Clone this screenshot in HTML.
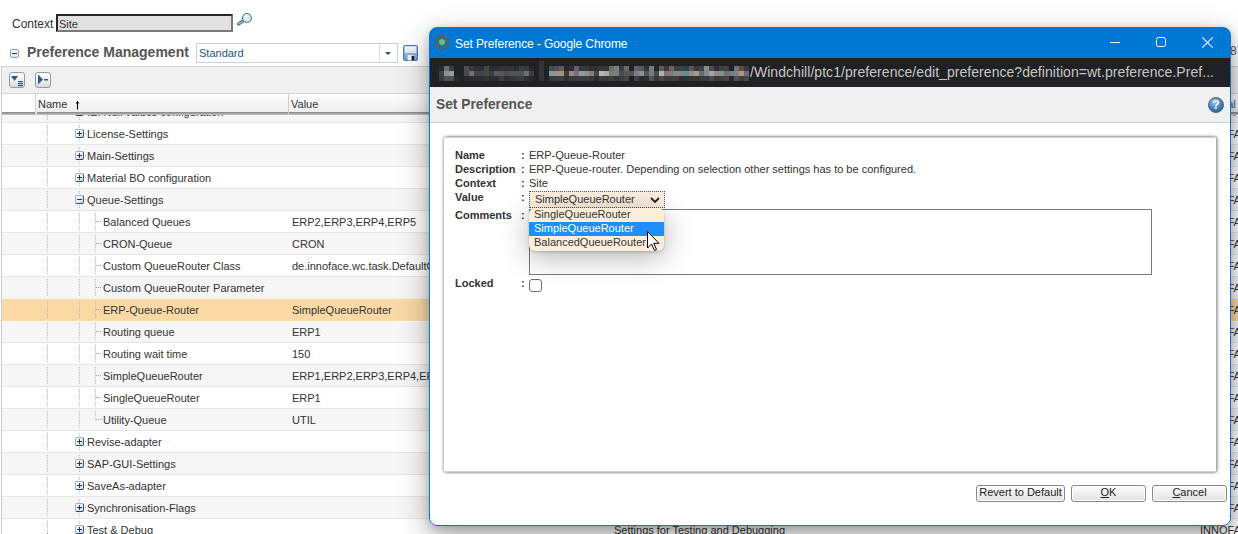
<!DOCTYPE html>
<html><head><meta charset="utf-8">
<style>
*{box-sizing:border-box;margin:0;padding:0}
html,body{width:1238px;height:534px;overflow:hidden;background:#fff;font-family:"Liberation Sans",sans-serif;position:relative}
.abs{position:absolute}
#ctxlbl{left:12px;top:17px;font-size:12px;color:#333}
#mag{left:236px;top:11px}
#ctxin{left:56px;top:14px;width:177px;height:18px;background:#e1e1e1;border-top:2px solid #262626;border-left:2px solid #262626;border-bottom:2px solid #7a7a7a;border-right:2px solid #7a7a7a;font-size:11px;color:#333;padding:2px 0 0 1px;line-height:12px}
#pm{left:27px;top:44px;font-size:14px;font-weight:bold;color:#555}
#pmicon{left:10px;top:49px;width:9px;height:9px;border:1px solid #8aa3bd;border-radius:2px;background:linear-gradient(#fff,#dfe8f0)}
#pmicon:after{content:"";position:absolute;left:1px;top:3px;width:5px;height:1px;background:#1f3d5c}
#std{left:196px;top:43px;width:202px;height:20px;border:1px solid #cfcfcf;background:#fff;font-size:11px;color:#1f5a82;padding:3px 0 0 2px}
#std .dv{position:absolute;left:182px;top:0;width:1px;height:18px;background:#ddd}
#std .ar{position:absolute;left:188px;top:8px;width:0;height:0;border-left:3px solid transparent;border-right:3px solid transparent;border-top:3px solid #1f5673}
#save{left:403px;top:45px;width:15px;height:16px;border:1px solid #4a77a8;border-radius:1px;background:linear-gradient(#e9f1fa,#b8cde4)}
#save:before{content:"";position:absolute;left:2px;top:0;width:9px;height:6px;background:#fff;border:1px solid #7d9fc4;border-top:none}
#save:after{content:"";position:absolute;left:5px;top:9px;width:4px;height:5px;background:#1e3f66}
#panelL{left:1px;top:66px;width:1px;height:468px;background:#cdcdcd}
#panelT{left:1px;top:66px;width:1237px;height:1px;background:#d3d3d3}
#toolbar{left:2px;top:67px;width:1236px;height:27px;background:#f0f0f0;border-bottom:1px solid #d6d6d6}
.tb{position:absolute;top:72px;width:16px;height:16px;border:1px solid #9a9a9a;border-radius:3px;background:linear-gradient(#fefefe 0,#f4f4f4 45%,#d9d9d9 100%)}
#hdr{left:2px;top:94px;width:1236px;height:21px;background:linear-gradient(#fefefe,#f3f3f3 60%,#e9e9e9);z-index:5}
#hdr .c0{position:absolute;left:0;top:0;width:33px;height:18px;background:#fff}
#hdr .bl{position:absolute;top:18px;height:3px;background:linear-gradient(#8a8a8a,#a8a8a8 66%,#d4d4d4)}
#hdr .sep{position:absolute;top:0;width:1px;height:21px;background:#cfcfcf}
#hdr .ht{position:absolute;top:4px;font-size:11px;color:#333}
.row{position:absolute;left:2px;width:1236px;height:22px;box-shadow:inset 0 1px 0 #e6e6e6;font-size:11px;color:#333;overflow:hidden}
.row.g{background:#f6f6f6}
.row.w{background:#fff}
.row.sel{background:#fad9a5;box-shadow:inset 0 1px 0 #eef3f8;height:23px;z-index:1}
.row.after{box-shadow:inset 0 2px 0 #fff}
.row span{position:absolute;top:6px;white-space:nowrap}
.row .v{left:290px}
.row .d{left:612px}
.row .o{left:1198px}
.vl{position:absolute;top:3px;width:1px;height:18px;background:repeating-linear-gradient(to bottom,#bababa 0 1px,transparent 1px 2px)}
.vh{position:absolute;top:3px;width:1px;height:9px;background:repeating-linear-gradient(to bottom,#bababa 0 1px,transparent 1px 2px)}
.hl{position:absolute;left:94px;top:11px;width:6px;height:1px;background:repeating-linear-gradient(to right,#a0a0a0 0 1px,transparent 1px 2px)}
.ic{position:absolute;left:73px;top:7px;width:9px;height:9px;border:1px solid;border-color:#9db1ca #3d5878 #2b4463 #9db1ca;border-radius:2px;background:linear-gradient(135deg,#fdfeff,#e9eff6 50%,#c9d6e6);z-index:2}
.ic:before{content:"";position:absolute;left:1px;top:3px;width:5px;height:1px;background:#1f3a5a}
.cd{position:absolute;left:83px;top:11px;width:1px;height:1px;background:#b0b0b0}
.ic.plus:after{content:"";position:absolute;left:3px;top:1px;width:1px;height:5px;background:#1f3a5a}
#behind87{left:1230px;top:44px;font-size:12px;color:#555}
/* dialog */
#dlg{z-index:10;left:429px;top:27px;width:802px;height:499px;border:1px solid #0d74d0;border-radius:8px;background:linear-gradient(#0078d4 0 30px,#fff 30px);overflow:hidden;box-shadow:0 10px 30px rgba(0,0,0,.34),0 5px 10px rgba(0,0,0,.1),0 0 7px rgba(0,0,0,.08)}
#title{left:0;top:0;width:800px;height:30px;background:#0078d4}
#title .tt{position:absolute;left:25px;top:9px;font-size:12px;color:#fff;letter-spacing:-0.1px}
#addr{left:0;top:30px;width:800px;height:29px;background:#202124}
#addr .url{position:absolute;left:320px;top:6px;font-size:14px;color:#c6c6c6;letter-spacing:0.05px}
#dhdr{left:0;top:59px;width:800px;height:36px;background:#f0f0f0;border-bottom:1px solid #cfcfcf}
#dhdr .h{position:absolute;left:6px;top:10px;font-size:13.75px;font-weight:bold;color:#555}
#help{left:778px;top:69px;width:16px;height:16px;border-radius:50%;background:radial-gradient(circle at 40% 30%,#9cc3e8,#3f76aa 60%,#2b5a8a);border:1px solid #3a6591;color:#fff;font-size:12px;font-weight:bold;text-align:center;line-height:14px}
#cpanel{left:14px;top:109px;width:772px;height:335px;background:#fff;border-top:1px solid #d2d2d2;border-bottom:1px solid #d2d2d2;box-shadow:-1.5px 0 3px rgba(0,0,0,.42),1.5px 0 3px rgba(0,0,0,.42)}
.fl{position:absolute;font-size:11px;color:#333;white-space:nowrap}
.fl b{font-weight:bold}
#sel{left:99px;top:163px;width:136px;height:17px;border:1px dotted #555;background:#fcefdf;font-size:11px;color:#333;padding:0 0 0 5px;line-height:14px}
#ta{left:99px;top:181px;width:623px;height:66px;border:1px solid #7a7a7a;background:#fff}
#cb{left:99px;top:251px;width:13px;height:13px;border:1px solid #707070;border-radius:3px;background:#fff}
.btn{position:absolute;top:457px;height:17px;border:1px solid #8a8a8a;border-radius:3px;background:linear-gradient(#fdfdfd,#efefef 50%,#e2e2e2);font-size:11px;color:#222;text-align:center;line-height:13px;box-shadow:inset 0 0 0 1px #fff}
#dd{z-index:11;left:529px;top:208px;width:135px;height:43px;background:#fdeedc;border-radius:6px;box-shadow:0 6px 28px rgba(0,0,0,.3),0 1px 3px rgba(0,0,0,.2);font-size:11px;color:#333}
#dd div{position:absolute;left:0;width:135px;height:14px;padding-left:5px;line-height:12px;white-space:nowrap}
#dd .hi{background:#1e8fff;color:#fff}
</style></head><body>
<div id="ctxlbl" class="abs">Context</div>
<div id="ctxin" class="abs">Site</div>
<svg id="mag" class="abs" width="16" height="16" viewBox="0 0 16 16"><path d="M2.6 13.0 L6.8 10.2" stroke="#3f6586" stroke-width="3.2" stroke-linecap="round"/><path d="M2.6 13.0 L6.8 10.2" stroke="#a9cde8" stroke-width="1.3" stroke-linecap="round"/><circle cx="10.9" cy="6.9" r="4.4" fill="#d7ecfa" stroke="#4f7594" stroke-width="1.1"/><circle cx="10" cy="5.8" r="1.6" fill="#fff" opacity=".8"/></svg>
<div id="pmicon" class="abs"></div>
<div id="pm" class="abs">Preference Management</div>
<div id="std" class="abs">Standard<div class="dv"></div><div class="ar"></div></div>
<svg class="abs" style="left:403px;top:45px" width="15" height="16" viewBox="0 0 16 16" preserveAspectRatio="none"><defs><linearGradient id="sg" x1="0" y1="0" x2="0" y2="1"><stop offset="0" stop-color="#a9c3e6"/><stop offset="1" stop-color="#7ea3d2"/></linearGradient><linearGradient id="lg" x1="0" y1="0" x2="0" y2="1"><stop offset="0" stop-color="#fdfeff"/><stop offset="1" stop-color="#d9e3ef"/></linearGradient></defs><rect x="0.6" y="0.6" width="14.8" height="14.8" rx="2" fill="url(#sg)" stroke="#4d7bb8" stroke-width="1.2"/><rect x="1.8" y="1.4" width="12.4" height="6.6" fill="url(#lg)"/><rect x="5" y="10" width="7" height="5.3" fill="#f2f5fa"/><rect x="9.2" y="10.8" width="2.8" height="4.6" fill="#0d1b33"/></svg>
<div id="behind87" class="abs">87</div>
<div id="panelT" class="abs"></div>
<div id="toolbar" class="abs"></div>
<div class="tb" style="left:9px"><svg width="14" height="14" style="position:absolute;left:0;top:0"><polygon points="1,3 8,3 4.5,8" fill="#2b5c85"/><rect x="8" y="8" width="5" height="1.2" fill="#2b5c85"/><rect x="8" y="10" width="5" height="1.2" fill="#2b5c85"/><rect x="8" y="12" width="5" height="1.2" fill="#2b5c85"/></svg></div>
<div class="tb" style="left:35px"><svg width="14" height="14" style="position:absolute;left:0;top:0"><polygon points="2,1.5 7,6.5 2,11.5" fill="#2b5c85"/><rect x="8" y="6" width="4" height="1.5" fill="#2b5c85"/></svg></div>
<div class="row g" style="top:100px"><i class="vl" style="left:45px"></i><i class="vl" style="left:77px"></i><i class="ic minus"></i><i class="cd"></i><span class="n" style="left:85px">IE: Null values configuration</span><span class="o">INNOFACE</span></div>
<div class="row w" style="top:122px"><i class="vl" style="left:45px"></i><i class="vl" style="left:77px"></i><i class="ic plus"></i><i class="cd"></i><span class="n" style="left:85px">License-Settings</span><span class="o">INNOFACE</span></div>
<div class="row g" style="top:144px"><i class="vl" style="left:45px"></i><i class="vl" style="left:77px"></i><i class="ic plus"></i><i class="cd"></i><span class="n" style="left:85px">Main-Settings</span><span class="o">INNOFACE</span></div>
<div class="row w" style="top:166px"><i class="vl" style="left:45px"></i><i class="vl" style="left:77px"></i><i class="ic plus"></i><i class="cd"></i><span class="n" style="left:85px">Material BO configuration</span><span class="o">INNOFACE</span></div>
<div class="row g" style="top:188px"><i class="vl" style="left:45px"></i><i class="vl" style="left:77px"></i><i class="ic minus"></i><i class="cd"></i><span class="n" style="left:85px">Queue-Settings</span><span class="o">INNOFACE</span></div>
<div class="row w" style="top:210px"><i class="vl" style="left:45px"></i><i class="vl" style="left:77px"></i><i class="vl" style="left:93px"></i><i class="hl"></i><span class="n" style="left:101px">Balanced Queues</span><span class="v">ERP2,ERP3,ERP4,ERP5</span><span class="o">INNOFACE</span></div>
<div class="row g" style="top:232px"><i class="vl" style="left:45px"></i><i class="vl" style="left:77px"></i><i class="vl" style="left:93px"></i><i class="hl"></i><span class="n" style="left:101px">CRON-Queue</span><span class="v">CRON</span><span class="o">INNOFACE</span></div>
<div class="row w" style="top:254px"><i class="vl" style="left:45px"></i><i class="vl" style="left:77px"></i><i class="vl" style="left:93px"></i><i class="hl"></i><span class="n" style="left:101px">Custom QueueRouter Class</span><span class="v">de.innoface.wc.task.DefaultQueueRouter</span><span class="o">INNOFACE</span></div>
<div class="row g" style="top:276px"><i class="vl" style="left:45px"></i><i class="vl" style="left:77px"></i><i class="vl" style="left:93px"></i><i class="hl"></i><span class="n" style="left:101px">Custom QueueRouter Parameter</span><span class="o">INNOFACE</span></div>
<div class="row sel" style="top:298px"><i class="vl" style="left:45px"></i><i class="vl" style="left:77px"></i><i class="vl" style="left:93px"></i><i class="hl"></i><span class="n" style="left:101px">ERP-Queue-Router</span><span class="v">SimpleQueueRouter</span><span class="o">INNOFACE</span></div>
<div class="row g after" style="top:320px"><i class="vl" style="left:45px"></i><i class="vl" style="left:77px"></i><i class="vl" style="left:93px"></i><i class="hl"></i><span class="n" style="left:101px">Routing queue</span><span class="v">ERP1</span><span class="o">INNOFACE</span></div>
<div class="row w" style="top:342px"><i class="vl" style="left:45px"></i><i class="vl" style="left:77px"></i><i class="vl" style="left:93px"></i><i class="hl"></i><span class="n" style="left:101px">Routing wait time</span><span class="v">150</span><span class="o">INNOFACE</span></div>
<div class="row g" style="top:364px"><i class="vl" style="left:45px"></i><i class="vl" style="left:77px"></i><i class="vl" style="left:93px"></i><i class="hl"></i><span class="n" style="left:101px">SimpleQueueRouter</span><span class="v">ERP1,ERP2,ERP3,ERP4,ERP5</span><span class="o">INNOFACE</span></div>
<div class="row w" style="top:386px"><i class="vl" style="left:45px"></i><i class="vl" style="left:77px"></i><i class="vl" style="left:93px"></i><i class="hl"></i><span class="n" style="left:101px">SingleQueueRouter</span><span class="v">ERP1</span><span class="o">INNOFACE</span></div>
<div class="row g" style="top:408px"><i class="vl" style="left:45px"></i><i class="vl" style="left:77px"></i><i class="vh" style="left:93px"></i><i class="hl"></i><span class="n" style="left:101px">Utility-Queue</span><span class="v">UTIL</span><span class="o">INNOFACE</span></div>
<div class="row w" style="top:430px"><i class="vl" style="left:45px"></i><i class="vl" style="left:77px"></i><i class="ic plus"></i><i class="cd"></i><span class="n" style="left:85px">Revise-adapter</span><span class="o">INNOFACE</span></div>
<div class="row g" style="top:452px"><i class="vl" style="left:45px"></i><i class="vl" style="left:77px"></i><i class="ic plus"></i><i class="cd"></i><span class="n" style="left:85px">SAP-GUI-Settings</span><span class="o">INNOFACE</span></div>
<div class="row w" style="top:474px"><i class="vl" style="left:45px"></i><i class="vl" style="left:77px"></i><i class="ic plus"></i><i class="cd"></i><span class="n" style="left:85px">SaveAs-adapter</span><span class="o">INNOFACE</span></div>
<div class="row g" style="top:496px"><i class="vl" style="left:45px"></i><i class="vl" style="left:77px"></i><i class="ic plus"></i><i class="cd"></i><span class="n" style="left:85px">Synchronisation-Flags</span><span class="o">INNOFACE</span></div>
<div class="row w" style="top:518px"><i class="vl" style="left:45px"></i><i class="vl" style="left:77px"></i><i class="ic plus"></i><i class="cd"></i><span class="n" style="left:85px">Test &amp; Debug</span><span class="d">Settings for Testing and Debugging</span><span class="o">INNOFACE</span></div>
<div id="hdr" class="abs"><div class="c0"></div><div class="bl" style="left:0;width:33px"></div><div class="bl" style="left:35px;width:1201px"></div><div class="sep" style="left:33px"></div><div class="sep" style="left:286px"></div><span class="ht" style="left:36px">Name</span><svg width="6" height="11" style="position:absolute;left:73px;top:6px"><path d="M2.5 2.5 V9.5" stroke="#000" stroke-width="1.1"/><path d="M0.7 3.6 L2.5 0.8 L4.3 3.6 Z" fill="#000"/></svg><span class="ht" style="left:289px">Value</span><span class="ht" style="left:1197px;color:#2b5c9a">Internal</span></div>
<div id="panelL" class="abs"></div>

<div id="dlg" class="abs">
  <div id="title" class="abs">
    <svg width="16" height="16" style="position:absolute;left:4px;top:6px" viewBox="0 0 16 16"><polygon points="8.00,-0.20 15.10,3.90 15.10,12.10 8.00,16.20 0.90,12.10 0.90,3.90" fill="#5e5e5e"/><circle cx="8" cy="8" r="4.1" fill="#0078d4"/><path d="M8.00 4.00 L1.89 0.72" stroke="#0078d4" stroke-width="1.1"/><path d="M11.46 6.00 L11.25 -0.93" stroke="#0078d4" stroke-width="1.1"/><path d="M11.46 10.00 L17.36 6.35" stroke="#0078d4" stroke-width="1.1"/><path d="M8.00 12.00 L14.11 15.28" stroke="#0078d4" stroke-width="1.1"/><path d="M4.54 10.00 L4.75 16.93" stroke="#0078d4" stroke-width="1.1"/><path d="M4.54 6.00 L-1.36 9.65" stroke="#0078d4" stroke-width="1.1"/><polygon points="8.00,4.70 10.86,6.35 10.86,9.65 8.00,11.30 5.14,9.65 5.14,6.35" fill="#78c04a"/></svg>
    <span class="tt">Set Preference - Google Chrome</span>
    <svg width="120" height="31" style="position:absolute;left:672px;top:-1px"><rect x="8" y="15" width="10" height="1" fill="#fff"/><rect x="54.5" y="10.5" width="9" height="9" rx="2" fill="none" stroke="#fff" stroke-width="1"/><path d="M100.3 10.3 L110.7 20.7 M110.7 10.3 L100.3 20.7" stroke="#fff" stroke-width="1.1"/></svg>
  </div>
  <div id="addr" class="abs"><svg width="330" height="29" style="position:absolute;left:0;top:0"><rect x="9" y="8" width="5" height="5" fill="#2a2a2d"/><rect x="14" y="8" width="5" height="5" fill="#6e6e70"/><rect x="19" y="8" width="5" height="5" fill="#3c3c3f"/><rect x="34" y="8" width="5" height="5" fill="#4a5253"/><rect x="39" y="8" width="5" height="5" fill="#3b393d"/><rect x="44" y="8" width="5" height="5" fill="#2e3034"/><rect x="49" y="8" width="5" height="5" fill="#303034"/><rect x="54" y="8" width="5" height="5" fill="#434843"/><rect x="59" y="8" width="5" height="5" fill="#2c2d33"/><rect x="64" y="8" width="5" height="5" fill="#2e2d2f"/><rect x="69" y="8" width="5" height="5" fill="#343438"/><rect x="74" y="8" width="5" height="5" fill="#2f3135"/><rect x="79" y="8" width="5" height="5" fill="#333336"/><rect x="84" y="8" width="5" height="5" fill="#2a2b2e"/><rect x="89" y="8" width="5" height="5" fill="#3b3d42"/><rect x="94" y="8" width="5" height="5" fill="#3a3a3e"/><rect x="99" y="8" width="5" height="5" fill="#262628"/><rect x="109" y="8" width="5" height="5" fill="#333336"/><rect x="119" y="8" width="5" height="5" fill="#464a4e"/><rect x="124" y="8" width="5" height="5" fill="#4f4e52"/><rect x="129" y="8" width="5" height="5" fill="#5a5f66"/><rect x="134" y="8" width="5" height="5" fill="#2a2a2b"/><rect x="139" y="8" width="5" height="5" fill="#2c2c34"/><rect x="144" y="8" width="5" height="5" fill="#6a5e66"/><rect x="149" y="8" width="5" height="5" fill="#38393f"/><rect x="154" y="8" width="5" height="5" fill="#3a3a3c"/><rect x="159" y="8" width="5" height="5" fill="#303234"/><rect x="164" y="8" width="5" height="5" fill="#2d2f33"/><rect x="169" y="8" width="5" height="5" fill="#38383c"/><rect x="174" y="8" width="5" height="5" fill="#363638"/><rect x="179" y="8" width="5" height="5" fill="#6e6e68"/><rect x="184" y="8" width="5" height="5" fill="#7c7c7c"/><rect x="189" y="8" width="5" height="5" fill="#3a3c44"/><rect x="194" y="8" width="5" height="5" fill="#6a6a60"/><rect x="204" y="8" width="5" height="5" fill="#5e6070"/><rect x="209" y="8" width="5" height="5" fill="#5a5850"/><rect x="214" y="8" width="5" height="5" fill="#2e3440"/><rect x="219" y="8" width="5" height="5" fill="#7a7c7a"/><rect x="224" y="8" width="5" height="5" fill="#282424"/><rect x="229" y="8" width="5" height="5" fill="#5a5a58"/><rect x="234" y="8" width="5" height="5" fill="#3a3c42"/><rect x="239" y="8" width="5" height="5" fill="#6a6462"/><rect x="244" y="8" width="5" height="5" fill="#3c3e42"/><rect x="249" y="8" width="5" height="5" fill="#3c4244"/><rect x="254" y="8" width="5" height="5" fill="#363c3e"/><rect x="259" y="8" width="5" height="5" fill="#545454"/><rect x="264" y="8" width="5" height="5" fill="#32383e"/><rect x="269" y="8" width="5" height="5" fill="#444048"/><rect x="274" y="8" width="5" height="5" fill="#8a8a88"/><rect x="279" y="8" width="5" height="5" fill="#4a4a4c"/><rect x="284" y="8" width="5" height="5" fill="#2a3038"/><rect x="289" y="8" width="5" height="5" fill="#3e4240"/><rect x="294" y="8" width="5" height="5" fill="#444240"/><rect x="304" y="8" width="5" height="5" fill="#6a7088"/><rect x="309" y="8" width="5" height="5" fill="#5a5038"/><rect x="314" y="8" width="5" height="5" fill="#3a383a"/><rect x="9" y="13" width="5" height="5" fill="#414144"/><rect x="14" y="13" width="5" height="5" fill="#8c8e90"/><rect x="19" y="13" width="5" height="5" fill="#9a9c9e"/><rect x="34" y="13" width="5" height="5" fill="#434b4b"/><rect x="39" y="13" width="5" height="5" fill="#707074"/><rect x="44" y="13" width="5" height="5" fill="#3d4443"/><rect x="49" y="13" width="5" height="5" fill="#40434c"/><rect x="54" y="13" width="5" height="5" fill="#444a48"/><rect x="59" y="13" width="5" height="5" fill="#3c3e44"/><rect x="64" y="13" width="5" height="5" fill="#4d5f6b"/><rect x="69" y="13" width="5" height="5" fill="#5b5550"/><rect x="74" y="13" width="5" height="5" fill="#4d4e51"/><rect x="79" y="13" width="5" height="5" fill="#4e535a"/><rect x="84" y="13" width="5" height="5" fill="#505359"/><rect x="89" y="13" width="5" height="5" fill="#4f5357"/><rect x="94" y="13" width="5" height="5" fill="#696e7a"/><rect x="99" y="13" width="5" height="5" fill="#3b3e3d"/><rect x="109" y="13" width="5" height="5" fill="#36363a"/><rect x="119" y="13" width="5" height="5" fill="#7a9aa0"/><rect x="124" y="13" width="5" height="5" fill="#9e8e88"/><rect x="129" y="13" width="5" height="5" fill="#a88f7e"/><rect x="134" y="13" width="5" height="5" fill="#3c3c44"/><rect x="139" y="13" width="5" height="5" fill="#8d8d88"/><rect x="144" y="13" width="5" height="5" fill="#7e6e80"/><rect x="149" y="13" width="5" height="5" fill="#9498a8"/><rect x="154" y="13" width="5" height="5" fill="#8c9490"/><rect x="159" y="13" width="5" height="5" fill="#8a7a78"/><rect x="164" y="13" width="5" height="5" fill="#444448"/><rect x="169" y="13" width="5" height="5" fill="#b5b8bb"/><rect x="174" y="13" width="5" height="5" fill="#b0a89a"/><rect x="179" y="13" width="5" height="5" fill="#7a7d74"/><rect x="184" y="13" width="5" height="5" fill="#7c7f78"/><rect x="189" y="13" width="5" height="5" fill="#4a4c50"/><rect x="194" y="13" width="5" height="5" fill="#555555"/><rect x="199" y="13" width="5" height="5" fill="#545454"/><rect x="204" y="13" width="5" height="5" fill="#7a7c88"/><rect x="209" y="13" width="5" height="5" fill="#8a8e90"/><rect x="214" y="13" width="5" height="5" fill="#4f5558"/><rect x="219" y="13" width="5" height="5" fill="#7a7870"/><rect x="224" y="13" width="5" height="5" fill="#3f4a55"/><rect x="229" y="13" width="5" height="5" fill="#a8b4b2"/><rect x="234" y="13" width="5" height="5" fill="#9a6878"/><rect x="239" y="13" width="5" height="5" fill="#7a7e7e"/><rect x="244" y="13" width="5" height="5" fill="#858a88"/><rect x="249" y="13" width="5" height="5" fill="#7c8285"/><rect x="254" y="13" width="5" height="5" fill="#5a9290"/><rect x="259" y="13" width="5" height="5" fill="#9a8a8a"/><rect x="264" y="13" width="5" height="5" fill="#a8a080"/><rect x="269" y="13" width="5" height="5" fill="#6a6a78"/><rect x="274" y="13" width="5" height="5" fill="#7e8a88"/><rect x="279" y="13" width="5" height="5" fill="#a0a4b8"/><rect x="284" y="13" width="5" height="5" fill="#a08878"/><rect x="289" y="13" width="5" height="5" fill="#7a9890"/><rect x="294" y="13" width="5" height="5" fill="#7a6a6a"/><rect x="299" y="13" width="5" height="5" fill="#6a8090"/><rect x="304" y="13" width="5" height="5" fill="#8a7e88"/><rect x="309" y="13" width="5" height="5" fill="#b09880"/><rect x="314" y="13" width="5" height="5" fill="#706a70"/><rect x="9" y="18" width="5" height="5" fill="#3a3a3c"/><rect x="14" y="18" width="5" height="5" fill="#505254"/><rect x="19" y="18" width="5" height="5" fill="#4f5052"/><rect x="24" y="18" width="5" height="5" fill="#29292b"/><rect x="34" y="18" width="5" height="5" fill="#29292c"/><rect x="39" y="18" width="5" height="5" fill="#2c2e31"/><rect x="44" y="18" width="5" height="5" fill="#2a2e32"/><rect x="49" y="18" width="5" height="5" fill="#2d2c2e"/><rect x="54" y="18" width="5" height="5" fill="#333336"/><rect x="59" y="18" width="5" height="5" fill="#2b2c31"/><rect x="64" y="18" width="5" height="5" fill="#2c2d30"/><rect x="69" y="18" width="5" height="5" fill="#3b3e40"/><rect x="74" y="18" width="5" height="5" fill="#2f3035"/><rect x="79" y="18" width="5" height="5" fill="#343538"/><rect x="84" y="18" width="5" height="5" fill="#38383c"/><rect x="89" y="18" width="5" height="5" fill="#3b3e46"/><rect x="94" y="18" width="5" height="5" fill="#2e3036"/><rect x="99" y="18" width="5" height="5" fill="#2a2a2c"/><rect x="109" y="18" width="5" height="5" fill="#333337"/><rect x="119" y="18" width="5" height="5" fill="#38383c"/><rect x="124" y="18" width="5" height="5" fill="#3a3a3e"/><rect x="129" y="18" width="5" height="5" fill="#3c3e42"/><rect x="134" y="18" width="5" height="5" fill="#303034"/><rect x="139" y="18" width="5" height="5" fill="#3a3a3e"/><rect x="144" y="18" width="5" height="5" fill="#3c3a40"/><rect x="149" y="18" width="5" height="5" fill="#3a3c44"/><rect x="154" y="18" width="5" height="5" fill="#3a3c3e"/><rect x="159" y="18" width="5" height="5" fill="#383a3c"/><rect x="164" y="18" width="5" height="5" fill="#2a2a2c"/><rect x="169" y="18" width="5" height="5" fill="#3a3c40"/><rect x="174" y="18" width="5" height="5" fill="#38383c"/><rect x="179" y="18" width="5" height="5" fill="#3c4040"/><rect x="184" y="18" width="5" height="5" fill="#363638"/><rect x="189" y="18" width="5" height="5" fill="#3a3e44"/><rect x="194" y="18" width="5" height="5" fill="#4a4444"/><rect x="204" y="18" width="5" height="5" fill="#3c4048"/><rect x="209" y="18" width="5" height="5" fill="#2e2a28"/><rect x="214" y="18" width="5" height="5" fill="#2c2e38"/><rect x="219" y="18" width="5" height="5" fill="#505254"/><rect x="224" y="18" width="5" height="5" fill="#3a3638"/><rect x="229" y="18" width="5" height="5" fill="#464848"/><rect x="234" y="18" width="5" height="5" fill="#3a3a40"/><rect x="239" y="18" width="5" height="5" fill="#3e3c3e"/><rect x="244" y="18" width="5" height="5" fill="#3a3c3c"/><rect x="249" y="18" width="5" height="5" fill="#2c3030"/><rect x="254" y="18" width="5" height="5" fill="#2e3434"/><rect x="259" y="18" width="5" height="5" fill="#383436"/><rect x="264" y="18" width="5" height="5" fill="#2e3434"/><rect x="269" y="18" width="5" height="5" fill="#3c3a3a"/><rect x="274" y="18" width="5" height="5" fill="#3a3c3e"/><rect x="279" y="18" width="5" height="5" fill="#484a4c"/><rect x="284" y="18" width="5" height="5" fill="#3a3a3c"/><rect x="289" y="18" width="5" height="5" fill="#3e3e40"/><rect x="294" y="18" width="5" height="5" fill="#484444"/><rect x="299" y="18" width="5" height="5" fill="#2c2c30"/><rect x="304" y="18" width="5" height="5" fill="#505050"/><rect x="309" y="18" width="5" height="5" fill="#3e3e40"/><rect x="314" y="18" width="5" height="5" fill="#484848"/><rect x="109" y="3" width="5" height="5" fill="#333336"/></svg><span class="url">/Windchill/ptc1/preference/edit_preference?definition=wt.preference.Pref...</span></div>
  <div id="dhdr" class="abs"><span class="h">Set Preference</span></div>
  <div id="help" class="abs">?</div>
  <div id="cpanel" class="abs"></div>
  <div class="fl" style="left:25px;top:121px;font-weight:bold">Name</div>
  <div class="fl" style="left:25px;top:135px;font-weight:bold">Description</div>
  <div class="fl" style="left:25px;top:149px;font-weight:bold">Context</div>
  <div class="fl" style="left:25px;top:163px;font-weight:bold">Value</div>
  <div class="fl" style="left:25px;top:181px;font-weight:bold">Comments</div>
  <div class="fl" style="left:25px;top:249px;font-weight:bold">Locked</div>
  <div class="fl" style="left:91px;top:121px;font-weight:bold">:</div>
  <div class="fl" style="left:91px;top:135px;font-weight:bold">:</div>
  <div class="fl" style="left:91px;top:149px;font-weight:bold">:</div>
  <div class="fl" style="left:91px;top:163px;font-weight:bold">:</div>
  <div class="fl" style="left:91px;top:181px;font-weight:bold">:</div>
  <div class="fl" style="left:91px;top:249px;font-weight:bold">:</div>
  <div class="fl" style="left:99px;top:121px">ERP-Queue-Router</div>
  <div class="fl" style="left:99px;top:135px">ERP-Queue-router. Depending on selection other settings has to be configured.</div>
  <div class="fl" style="left:99px;top:149px">Site</div>
  <div id="sel" class="abs">SimpleQueueRouter<svg width="10" height="7" style="position:absolute;left:120px;top:5px"><path d="M1 1 L5 5 L9 1" fill="none" stroke="#222" stroke-width="1.8"/></svg></div>
  <div id="ta" class="abs"></div>
  <div id="cb" class="abs"></div>
  <div class="btn" style="left:546px;width:89px">Revert to Default</div>
  <div class="btn" style="left:641px;width:75px"><u>O</u>K</div>
  <div class="btn" style="left:722px;width:75px"><u>C</u>ancel</div>
</div>
<div id="dd" class="abs"><div style="top:0">SingleQueueRouter</div><div class="hi" style="top:14px">SimpleQueueRouter</div><div style="top:28px">BalancedQueueRouter</div></div>
<svg width="14" height="22" style="z-index:12;position:absolute;left:647px;top:231px" viewBox="0 0 14 22"><path d="M0.5 0.5 L0.5 17 L4.5 13 L7.5 19.5 L9.5 18.5 L6.8 12.3 L12 12.3 Z" fill="#fff" stroke="#000" stroke-width="1"/></svg>
</body></html>
